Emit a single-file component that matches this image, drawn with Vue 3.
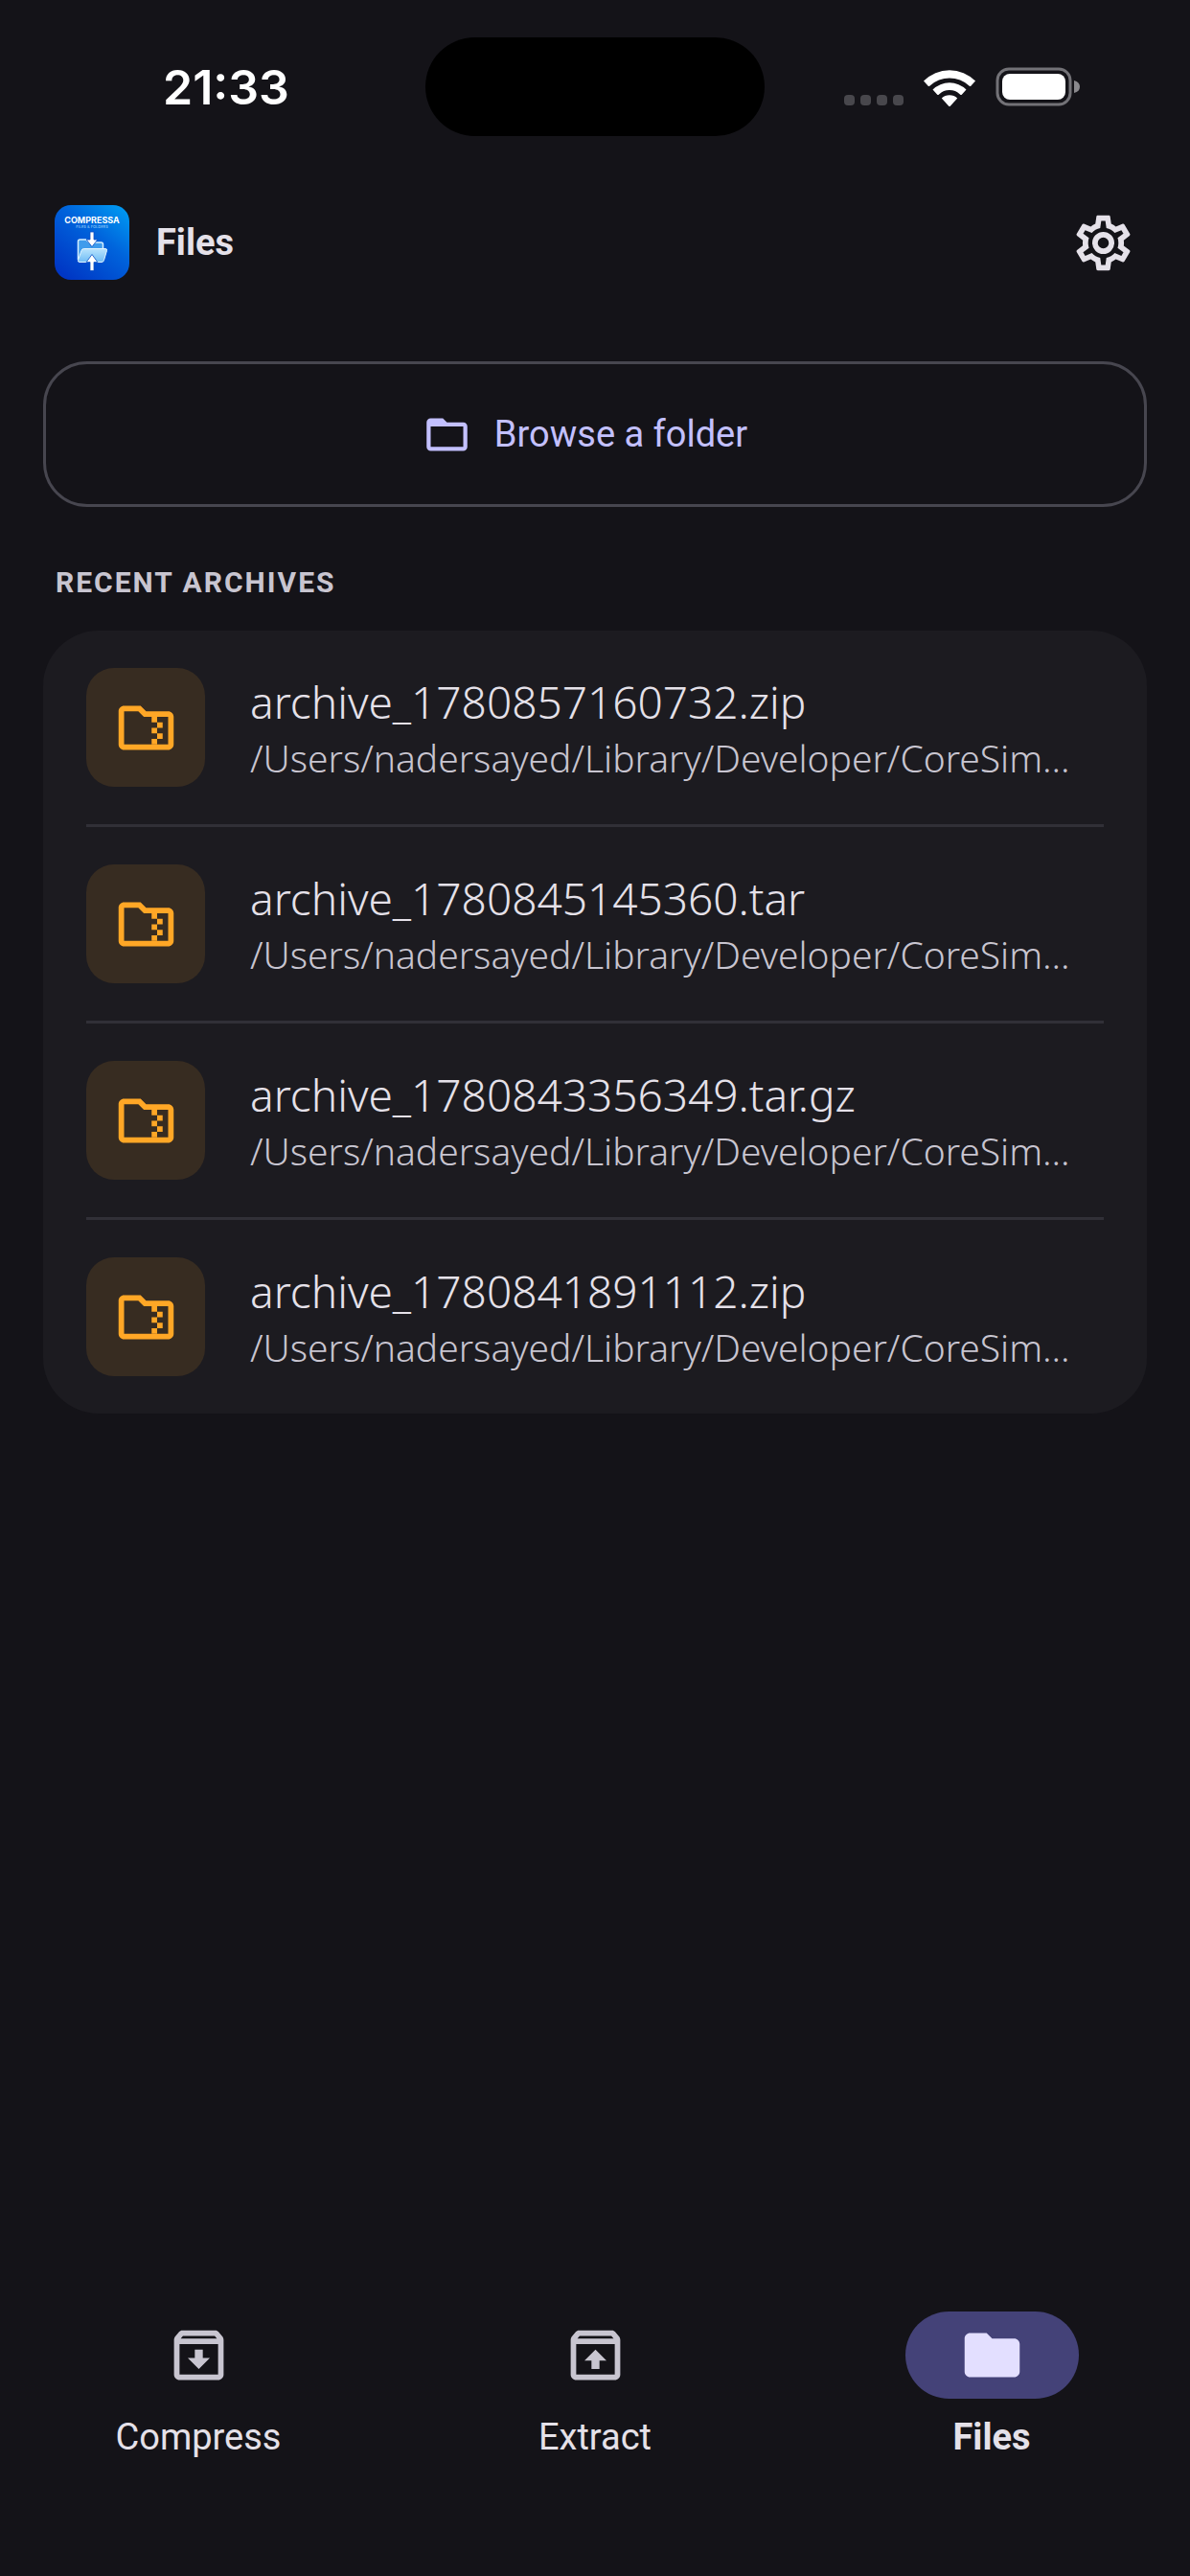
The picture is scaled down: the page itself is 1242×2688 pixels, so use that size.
<script setup>
import { ref } from 'vue'

const location = '/Users/nadersayed/Library/Developer/CoreSim…'

const archives = [
  { name: 'archive_1780857160732.zip', path: location },
  { name: 'archive_1780845145360.tar', path: location },
  { name: 'archive_1780843356349.tar.gz', path: location },
  { name: 'archive_1780841891112.zip', path: location },
]

const boxPath =
  'M20.54 5.23l-1.39-1.68C18.88 3.21 18.47 3 18 3H6c-.47 0-.88.21-1.16.55L3.46 5.23C3.17 5.57 3 6.02 3 6.5V19c0 1.1.9 2 2 2h14c1.1 0 2-.9 2-2V6.5c0-.48-.17-.93-.46-1.27zM6.24 5h11.52l.83 1H5.42l.82-1zM5 19V8h14v11H5z'

const tabs = [
  { label: 'Compress', icon: boxPath + 'M13.45 10h-2.9v3H8l4 4 4-4h-2.55z' },
  { label: 'Extract', icon: boxPath + 'M10.55 17h2.9v-3H16l-4-4-4 4h2.55z' },
  {
    label: 'Files',
    icon: 'M10 4H4c-1.1 0-2 .9-2 2v12c0 1.1.9 2 2 2h16c1.1 0 2-.9 2-2V8c0-1.1-.9-2-2-2h-8z',
  },
]

const active = ref('Files')
</script>

<template>
  <div class="screen">
    <div class="status">
      <div class="clock">21:33</div>
      <div class="island"></div>
      <div class="indicators">
        <span class="cell"><i></i><i></i><i></i><i></i></span>
        <svg class="wifi" viewBox="0 0 54 40" aria-hidden="true">
          <path d="M0 13.500A38 38 0 0 1 54 13.500L49.500 18.500Q48.500 19.500 47.500 18.500A30 30 0 0 0 6.500 18.500Q5.500 19.500 4.500 18.500Z" />
          <path d="M9.500 22.500A25 25 0 0 1 44.500 22.500L40 27.500Q39 28.500 38 27.500A16 16 0 0 0 16 27.500Q15 28.500 14 27.500Z" />
          <path d="M18.800 31.500A12 12 0 0 1 35.200 31.500L28 39.500Q27 40.500 26 39.500Z" />
        </svg>
        <svg class="battery" viewBox="0 0 89 41" aria-hidden="true">
          <rect x="2" y="2" width="76" height="37" rx="12" fill="none" stroke="#737277" stroke-width="3" />
          <rect x="7" y="7" width="66" height="27" rx="8" fill="#fff" />
          <path d="M82 14q6 1.500 6 6.500t-6 6.500z" fill="#8a898d" />
        </svg>
      </div>
    </div>

    <header class="bar">
      <svg class="logo" viewBox="0 0 78 78" role="img" aria-label="Compressa">
        <defs>
          <linearGradient id="sky" x1="1" y1="0" x2="0.2" y2="1">
            <stop offset="0" stop-color="#00a0f4" />
            <stop offset="0.45" stop-color="#0064dc" />
            <stop offset="1" stop-color="#0036c4" />
          </linearGradient>
          <linearGradient id="ice" x1="0" y1="0" x2="0" y2="1">
            <stop offset="0" stop-color="#b9e4fd" />
            <stop offset="1" stop-color="#6fbcf5" />
          </linearGradient>
        </defs>
        <rect width="78" height="78" rx="17" fill="url(#sky)" />
        <text x="39" y="18.500" text-anchor="middle" class="brand">COMPRESSA</text>
        <text x="39" y="23.500" text-anchor="middle" class="tagline">FILES &amp; FOLDERS</text>
        <path d="M24.500 57V38q0-2 2-2h6l4 3h12q2 0 2 2v6" fill="#3f9cec" stroke="#d5efff" stroke-width="1.500" />
        <path d="M30.500 45.500H53q2 0 1.500 2l-3 10q-.5 2-2.500 2H26q-2 0-1.500-2l3.500-10q.7-2 2.500-2z" fill="url(#ice)" stroke="#e4f5ff" stroke-width="1" />
        <path d="M37 28h4v8h3.800L39 43.500 33.200 36H37z" fill="#fff" stroke="#0a4fc4" stroke-width=".8" />
        <path d="M37 68.500h4v-9h3.800L39 51.500l-5.800 8H37z" fill="#fff" stroke="#0a4fc4" stroke-width=".8" />
      </svg>
      <h1>Files</h1>
      <button class="settings" type="button" aria-label="Settings">
        <svg class="icon" viewBox="0 0 24 24" aria-hidden="true">
          <path d="M12,8A4,4 0 0,1 16,12A4,4 0 0,1 12,16A4,4 0 0,1 8,12A4,4 0 0,1 12,8M12,10A2,2 0 0,0 10,12A2,2 0 0,0 12,14A2,2 0 0,0 14,12A2,2 0 0,0 12,10M10,22C9.75,22 9.54,21.82 9.5,21.58L9.13,18.93C8.5,18.68 7.96,18.34 7.44,17.94L4.95,18.95C4.73,19.03 4.46,18.95 4.34,18.73L2.34,15.27C2.21,15.05 2.27,14.78 2.46,14.63L4.57,12.97L4.5,12L4.57,11L2.46,9.37C2.27,9.22 2.21,8.95 2.34,8.73L4.34,5.27C4.46,5.05 4.73,4.96 4.95,5.05L7.44,6.05C7.96,5.66 8.5,5.32 9.13,5.07L9.5,2.42C9.54,2.18 9.75,2 10,2H14C14.25,2 14.46,2.18 14.5,2.42L14.87,5.07C15.5,5.32 16.04,5.66 16.56,6.05L19.05,5.05C19.27,4.96 19.54,5.05 19.66,5.27L21.66,8.73C21.79,8.95 21.73,9.22 21.54,9.37L19.43,11L19.5,12L19.43,13L21.54,14.63C21.73,14.78 21.79,15.05 21.66,15.27L19.66,18.73C19.54,18.95 19.27,19.04 19.05,18.95L16.56,17.95C16.04,18.34 15.5,18.68 14.87,18.93L14.5,21.58C14.46,21.82 14.25,22 14,22H10M11.25,4L10.88,6.61C9.68,6.86 8.62,7.5 7.85,8.39L5.44,7.35L4.69,8.65L6.8,10.2C6.4,11.37 6.4,12.64 6.8,13.8L4.68,15.36L5.43,16.66L7.86,15.62C8.63,16.5 9.68,17.14 10.87,17.38L11.24,20H12.76L13.13,17.39C14.32,17.14 15.37,16.5 16.14,15.62L18.57,16.66L19.32,15.36L17.2,13.81C17.6,12.64 17.6,11.37 17.2,10.2L19.31,8.65L18.56,7.35L16.15,8.39C15.38,7.5 14.32,6.86 13.12,6.62L12.75,4H11.25Z" />
        </svg>
      </button>
    </header>

    <main>
      <button class="browse" type="button">
        <svg viewBox="0 0 24 24" aria-hidden="true">
          <path d="M10 4H4c-1.100 0-2 .9-2 2v12c0 1.100.9 2 2 2h16c1.100 0 2-.9 2-2V8c0-1.100-.9-2-2-2h-8l-2-2zm10 14H4V8h16v10z" />
        </svg>
        <span>Browse a folder</span>
      </button>

      <h2>RECENT ARCHIVES</h2>
      <ul class="list">
        <li v-for="archive in archives" :key="archive.name">
          <a class="row" href="#">
            <span class="tile">
              <svg class="icon" viewBox="0 0 24 24" aria-hidden="true">
                <path fill-rule="evenodd" d="M10 4H4c-1.100 0-2 .9-2 2v12c0 1.100.9 2 2 2h16c1.100 0 2-.9 2-2V8c0-1.100-.9-2-2-2h-8l-2-2zM4 6h5.170l2 2H20v10H4z" />
                <path d="M14 8h2v2h-2zM16 10h2v2h-2zM14 12h2v2h-2zM16 14h2v2h-2zM14 16h2v2h-2z" />
              </svg>
            </span>
            <span class="info">
              <span class="name">{{ archive.name }}</span>
              <span class="path">{{ archive.path }}</span>
            </span>
          </a>
        </li>
      </ul>
    </main>

    <nav>
      <button
        v-for="tab in tabs"
        :key="tab.label"
        type="button"
        :class="{ active: active === tab.label }"
        @click="active = tab.label"
      >
        <span class="pill">
          <svg class="icon" viewBox="0 0 24 24" aria-hidden="true"><path :d="tab.icon" fill-rule="evenodd" /></svg>
        </span>
        <span>{{ tab.label }}</span>
      </button>
    </nav>
  </div>
</template>

<style>
body {
  margin: 0;
  background: #141318;
}
</style>

<style scoped>
.screen {
  display: flex;
  flex-direction: column;
  min-height: 100vh;
  background: #141318;
  color: #e5e1e9;
  font-family: Roboto, "Noto Sans", sans-serif;
}
button {
  margin: 0;
  padding: 0;
  border: 0;
  background: none;
  color: inherit;
  font: inherit;
}
svg {
  display: block;
  flex: none;
  fill: currentColor;
}
.icon {
  width: 69px;
  height: 69px;
}

.status {
  display: grid;
  grid-template-columns: 1fr 354px 1fr;
  align-items: center;
  padding-top: 39px;
  color: #fff;
}
.clock {
  padding-left: 28px;
  text-align: center;
  font-family: Inter, sans-serif;
  font-size: 50px;
  font-weight: 600;
  line-height: 60px;
}
.island {
  height: 103px;
  border-radius: 52px;
  background: #000;
}
.indicators {
  display: flex;
  align-items: center;
  justify-content: flex-end;
  gap: 21px;
  padding-right: 114px;
}
.cell {
  display: flex;
  gap: 6px;
  padding-top: 28px;
}
.cell i {
  width: 11px;
  height: 11px;
  border-radius: 4px;
  background: #48474c;
}
.wifi {
  width: 54px;
  height: 40px;
}
.battery {
  width: 89px;
  height: 41px;
}

.bar {
  display: flex;
  align-items: center;
  padding: 72px 56px 85px 57px;
}
.logo {
  width: 78px;
  height: 78px;
}
.brand {
  fill: #fff;
  font: 700 9px Inter, sans-serif;
}
.tagline {
  fill: #8cc4f6;
  font: 500 4px Inter, sans-serif;
}
h1 {
  margin: 0 0 0 28px;
  font-size: 38px;
  font-weight: 700;
  line-height: 58px;
}
.settings {
  margin-left: auto;
}

main {
  padding: 0 45px;
}
.browse {
  display: flex;
  align-items: center;
  justify-content: center;
  gap: 24px;
  box-sizing: border-box;
  width: 100%;
  height: 152px;
  padding-right: 21px;
  border: 3px solid #47464f;
  border-radius: 46px;
  color: #c3c0ff;
  font-size: 38px;
}
.browse svg {
  width: 51px;
  height: 51px;
}
h2 {
  margin: 57px 13px 28px;
  color: #c8c5d0;
  font-size: 30px;
  font-weight: 700;
  line-height: 44px;
  letter-spacing: 2px;
}
.list {
  margin: 0;
  padding: 0 45px;
  border-radius: 58px;
  background: #1c1b20;
  list-style: none;
}
li + li {
  border-top: 3px solid #313037;
}
.row {
  display: flex;
  align-items: center;
  gap: 47px;
  padding: 39px 0;
  color: inherit;
  text-decoration: none;
}
.tile {
  display: grid;
  flex: none;
  place-items: center;
  width: 124px;
  height: 124px;
  border-radius: 29px;
  background: #372c21;
  color: #ffa726;
}
.info {
  display: flex;
  flex-direction: column;
  gap: 2px;
  min-width: 0;
  font-family: "Noto Sans", sans-serif;
  font-weight: 300;
  white-space: nowrap;
}
.name {
  font-size: 46px;
  line-height: 62px;
}
.path {
  color: #c8c5d0;
  font-size: 39px;
  line-height: 52px;
}

nav {
  display: grid;
  grid-template-columns: repeat(3, 1fr);
  margin-top: auto;
  padding-bottom: 121px;
}
nav button {
  display: flex;
  flex-direction: column;
  align-items: center;
  gap: 16px;
  font-size: 38px;
  line-height: 48px;
}
.pill {
  display: grid;
  place-items: center;
  width: 181px;
  height: 91px;
  border-radius: 46px;
  color: #c8c5d0;
}
.active {
  font-weight: 700;
}
.active .pill {
  background: #444278;
  color: #e3dfff;
}
</style>
